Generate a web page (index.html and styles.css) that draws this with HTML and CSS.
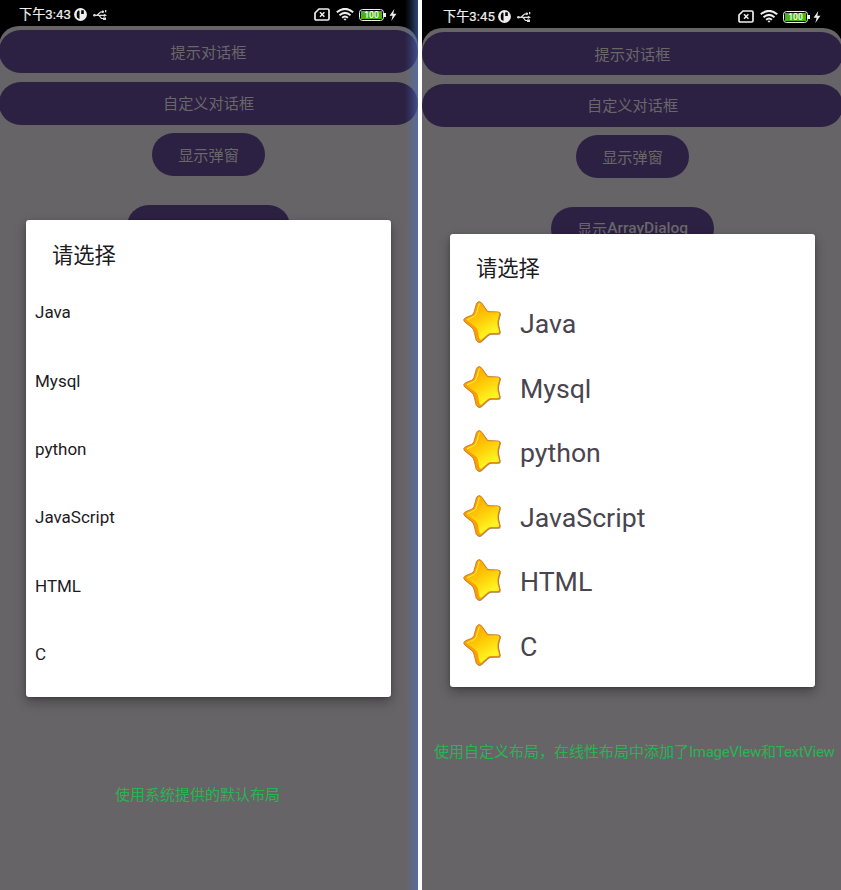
FILE: index.html
```html
<!DOCTYPE html>
<html lang="zh-CN">
<head>
<meta charset="utf-8">
<title>ArrayDialog</title>
<link rel="stylesheet" href="styles.css">
</head>
<body>
<svg class="defs" width="0" height="0">
  <defs>
    <linearGradient id="face" x1="0.2" y1="0" x2="0.7" y2="1">
      <stop offset="0.15" stop-color="#ffae00"/><stop offset="0.5" stop-color="#ffd00a"/><stop offset="0.85" stop-color="#fff321"/>
    </linearGradient>
    <symbol id="star" viewBox="22 18 118 130">
      <path d="M63 25Q71 14 80 26L93 45Q96 50 102 50L128 51Q137 52 134 60Q126 82 130 94L134 111Q135 119 126 118L107 118Q101 118 95 124L80 138Q70 148 62 137L56 112Q54 103 48 98L27 81Q20 75 29 69L48 61Q53 59 55 53Z" fill="#806b58" opacity=".65" transform="translate(2 2)"/>
      <path d="M63 25Q71 14 80 26L93 45Q96 50 102 50L128 51Q137 52 134 60Q126 82 130 94L134 111Q135 119 126 118L107 118Q101 118 95 124L80 138Q70 148 62 137L56 112Q54 103 48 98L27 81Q20 75 29 69L48 61Q53 59 55 53Z" fill="#ff9c00" stroke="#b97a2c" stroke-width="2.5"/>
      <path d="M73 24Q77 23 81 31L91 47Q94 53 100 53L128 53Q133 53 131 60Q123 80 127 96L131 110Q132 115 125 115L105 115Q100 115 94 121L77 135Q73 137 71 129L67 108Q65 101 59 96L36 79Q31 76 38 73L55 66Q61 64 63 57Z" fill="url(#face)"/>
      <path d="M71 27L62 56Q60 63 53 66L35 74" fill="none" stroke="#ffe52a" stroke-width="4" stroke-linecap="round"/>
    </symbol>
    <symbol id="app" viewBox="0 0 13 13">
      <circle cx="6.5" cy="6.5" r="6.4" fill="#eee"/>
      <path d="M4.2 2.5Q1.8 4.8 3.2 9.8L5.5 11V2.8Z" fill="#000"/>
      <path d="M7.2 2.3H9.8V6H7.2Z" fill="#000"/>
    </symbol>
    <symbol id="usb" viewBox="0 0 14 12">
      <path d="M1 6.3H12M4 6.3L7.5 3H10M6 6.3L8.5 9.5H11" fill="none" stroke="#ddd" stroke-width="1.2"/>
      <circle cx="1.4" cy="6.3" r="1.3" fill="#ddd"/><circle cx="9.8" cy="2.8" r="1.3" fill="#ddd"/>
      <path d="M10.8 4.7L14 6.3L10.8 8ZM10 8.5H13V11H10ZM12 1H13.3V3.2H12Z" fill="#ddd"/>
    </symbol>
    <symbol id="sim" viewBox="0 0 16 13">
      <path d="M5 1H13.7Q15 1 15 2.3V10.7Q15 12 13.7 12H2.3Q1 12 1 10.7V5Z" fill="none" stroke="#eee" stroke-width="1.7"/>
      <path d="M6 4.3L10.4 8.7M10.4 4.3L6 8.7" stroke="#eee" stroke-width="1.5"/>
    </symbol>
    <symbol id="wifi" viewBox="0 0 18 13">
      <path d="M.8 4.3Q9-2.6 17.2 4.3M3.5 7.2Q9 2.5 14.5 7.2M6.1 9.8Q9 7.2 11.9 9.8" fill="none" stroke="#eee" stroke-width="2"/>
      <path d="M7.5 11Q9 9.8 10.5 11L9 12.8Z" fill="#eee"/>
    </symbol>
    <symbol id="bolt" viewBox="0 0 8 12"><path d="M5.3 0L.5 6.8H3.6L2.3 12L7.5 4.8H4.3Z" fill="#eee"/></symbol>
  </defs>
</svg>

<main class="compare">
  <section class="phone phone-a">
    <header class="status">
      <span class="time">下午3:43</span>
      <svg class="i-app"><use href="#app"/></svg>
      <svg class="i-usb"><use href="#usb"/></svg>
      <span class="grow"></span>
      <svg class="i-sim"><use href="#sim"/></svg>
      <svg class="i-wifi"><use href="#wifi"/></svg>
      <span class="battery"><span class="level">100</span></span>
      <svg class="i-bolt"><use href="#bolt"/></svg>
    </header>
    <div class="screen">
      <div class="btn wide">提示对话框</div>
      <div class="btn wide">自定义对话框</div>
      <div class="btn small">显示弹窗</div>
      <div class="btn array"></div>
    </div>
    <div class="dialog">
      <h1>请选择</h1>
      <ul class="plain">
        <li>Java</li><li>Mysql</li><li>python</li><li>JavaScript</li><li>HTML</li><li>C</li>
      </ul>
    </div>
    <p class="note">使用系统提供的默认布局</p>
  </section>

  <section class="phone phone-b">
    <header class="status">
      <span class="time">下午3:45</span>
      <svg class="i-app"><use href="#app"/></svg>
      <svg class="i-usb"><use href="#usb"/></svg>
      <span class="grow"></span>
      <svg class="i-sim"><use href="#sim"/></svg>
      <svg class="i-wifi"><use href="#wifi"/></svg>
      <span class="battery"><span class="level">100</span></span>
      <svg class="i-bolt"><use href="#bolt"/></svg>
    </header>
    <div class="screen">
      <div class="btn wide">提示对话框</div>
      <div class="btn wide">自定义对话框</div>
      <div class="btn small">显示弹窗</div>
      <div class="btn array">显示<b>ArrayDialog</b></div>
    </div>
    <div class="dialog">
      <h1>请选择</h1>
      <ul class="starred">
        <li><svg><use href="#star"/></svg>Java</li>
        <li><svg><use href="#star"/></svg>Mysql</li>
        <li><svg><use href="#star"/></svg>python</li>
        <li><svg><use href="#star"/></svg>JavaScript</li>
        <li><svg><use href="#star"/></svg>HTML</li>
        <li><svg><use href="#star"/></svg>C</li>
      </ul>
    </div>
    <p class="note">使用自定义布局，在线性布局中添加了<span>ImageVIew</span>和<span>TextView</span></p>
  </section>
</main>
</body>
</html>
```

FILE: styles.css
```css
* { box-sizing: border-box; }
body { margin: 0; background: #fff; font-family: Roboto, "Noto Sans CJK SC", sans-serif; }
.defs { position: absolute; }
.compare { display: grid; grid-template-columns: 418px 419px; column-gap: 4px; height: 890px; overflow: hidden; }
.phone { position: relative; display: flex; flex-direction: column; height: 890px; overflow: hidden; background: #000; }

.status { display: flex; align-items: center; flex: none; height: 26px; padding: 3px 21px 0 19px; color: #eee; }
.phone-b .status { height: 28px; padding: 5px 20px 0 21px; }
.time { font-size: 13.2px; font-weight: 400; line-height: 22px; width: 55px; white-space: nowrap; -webkit-text-stroke: .2px #eee; }
.grow { flex: 1; }
.status svg { display: block; flex: none; }
.i-app { width: 13px; height: 13px; }
.i-usb { width: 14px; height: 12px; margin-left: 6px; }
.i-sim { width: 16px; height: 13px; }
.i-wifi { width: 18px; height: 13px; margin-left: 6px; }
.battery { position: relative; display: block; width: 25px; height: 12px; margin-left: 5px; padding: 1px; border: 1.5px solid #eee; border-radius: 3.5px; }
.battery::after { content: ""; position: absolute; right: -3px; top: 3px; width: 2px; height: 4px; background: #eee; }
.level { display: block; height: 100%; background: #45b414; color: #fff; font-size: 8.5px; font-weight: 500; line-height: 8px; text-align: center; }
.i-bolt { width: 8px; height: 12px; margin-left: 5px; }

.screen { flex: 1; display: flex; flex-direction: column; align-items: center; padding-top: 4px; border-radius: 20px 20px 0 0; background: #676467; }
.phone-a .screen { margin: 0 0 0 -1px; }
.phone-b .screen { margin-right: -2px; }
.btn { display: flex; align-items: center; justify-content: center; flex: none; height: 43px; margin-bottom: 8.5px; padding-bottom: 2px; border-radius: 22px; background: #2c2143; color: #6a676a; font-size: 15.2px; white-space: nowrap; font-weight: 400; }
.btn b { font-weight: 500; font-size: 15.5px; }
.wide { width: 100%; }
.small { width: 113px; }
.array { width: 163px; margin-top: 20px; padding-bottom: 0; }

.dialog { position: absolute; left: 26px; top: 220px; width: 365px; height: 477px; border-radius: 3px; background: #fff; box-shadow: 0 5px 12px rgba(0,0,0,.32), 0 1px 3px rgba(0,0,0,.2); }
.phone-b .dialog { left: 28px; top: 234px; height: 453px; }
.dialog h1 { margin: 0; padding: 20px 0 0 26px; height: 58px; font-size: 21.3px; line-height: 32px; font-weight: 400; color: #1c1b1f; }
.phone-b .dialog h1 { height: 57.6px; padding-top: 19px; }
.dialog ul { margin: 0; padding: 0; list-style: none; }
.plain li { display: flex; align-items: center; height: 68.4px; padding-left: 9px; font-size: 17px; color: #1c1b1f; }
.starred li { display: flex; align-items: center; height: 64.65px; padding-left: 13px; font-size: 26.7px; color: #49454f; }
.starred svg { flex: none; width: 39px; height: 43px; margin-right: 18px; margin-bottom: 3px; }

.note { position: absolute; left: 115px; top: 784px; margin: 0; font-size: 15px; line-height: 22px; color: #27b454; white-space: nowrap; }
.note span { letter-spacing: -.3px; }
.phone-b .note { left: 12px; top: 741px; }
.phone-a::after { content: ""; position: absolute; top: 0; right: 0; bottom: 0; width: 13px; background: linear-gradient(90deg, transparent, rgba(75,115,195,.2) 40%, rgba(75,115,195,.6)); }
```
